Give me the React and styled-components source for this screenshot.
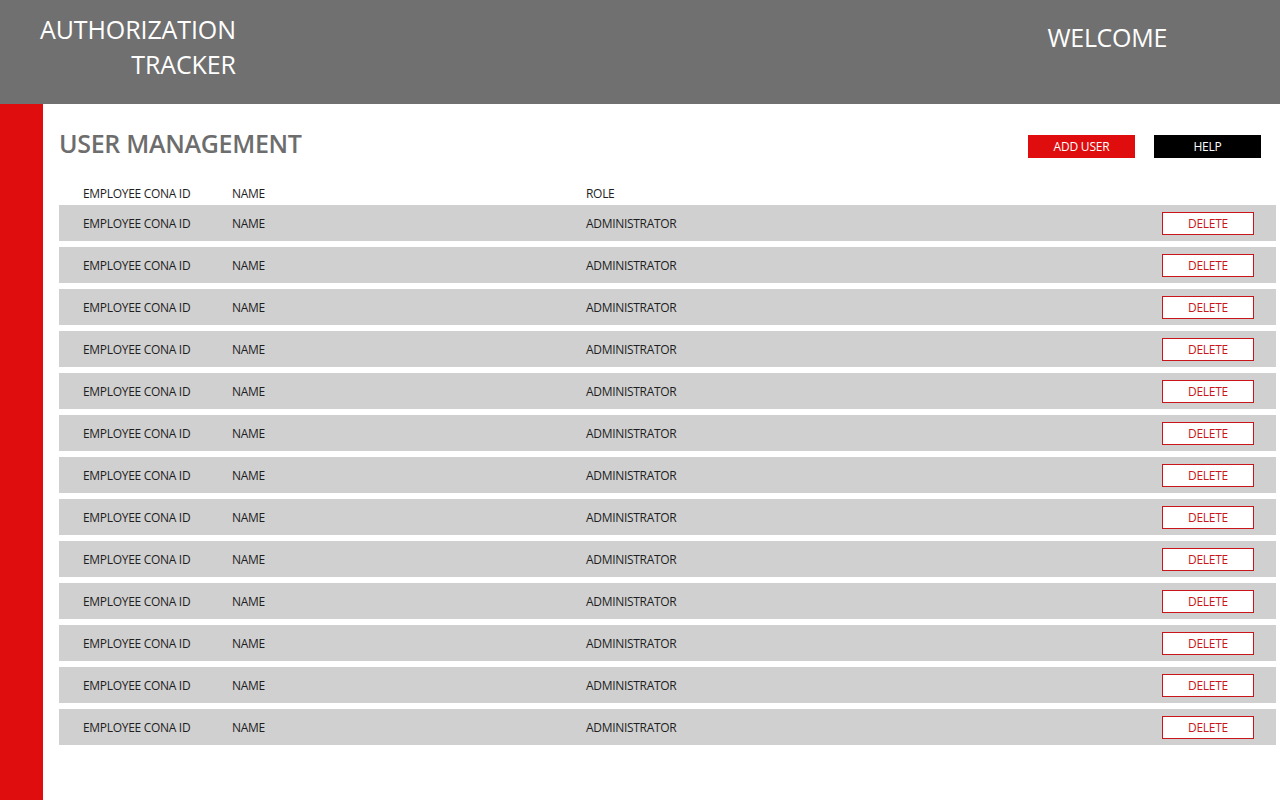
import React from 'react';
import styled, { createGlobalStyle } from 'styled-components';

const GlobalStyle = createGlobalStyle`
  html, body {
    margin: 0;
    padding: 0;
    background: #ffffff;
    font-family: "Open Sans", "Noto Sans", sans-serif;
  }
`;

const Page = styled.div`
  display: flex;
  flex-direction: column;
  width: 1280px;
  height: 800px;
  overflow: hidden;
`;

const Header = styled.header`
  height: 104px;
  background: #707070;
  display: flex;
  justify-content: space-between;
  color: #ffffff;
  flex-shrink: 0;
`;

const Brand = styled.div`
  display: flex;
  flex-direction: column;
  align-items: flex-end;
  padding: 12px 0 0 40px;
  font-size: 25px;
  line-height: 35px;
  letter-spacing: -0.1px;
`;

const Welcome = styled.div`
  padding: 20px 113px 0 0;
  font-size: 25px;
  line-height: 35px;
  letter-spacing: -0.3px;
`;

const Body = styled.div`
  flex: 1;
  display: flex;
`;

const Sidebar = styled.aside`
  width: 43px;
  background: #df0d0d;
  flex-shrink: 0;
`;

const Main = styled.main`
  flex: 1;
  padding: 20px 4px 0 16px;
`;

const TopBar = styled.div`
  display: flex;
  align-items: flex-start;
  justify-content: space-between;
  padding-right: 15px;
`;

const Title = styled.h1`
  margin: 0;
  font-size: 25px;
  line-height: 38px;
  font-weight: 600;
  color: #6d6d6d;
  letter-spacing: -0.3px;
`;

const Actions = styled.div`
  display: flex;
  gap: 19px;
  padding-top: 11px;
`;

const ActionButton = styled.button`
  width: 107px;
  height: 23px;
  border: none;
  padding: 0;
  font-family: inherit;
  font-size: 12px;
  letter-spacing: -0.2px;
  color: #ffffff;
  background: ${p => (p.$variant === 'dark' ? '#000000' : '#df0d0d')};
  cursor: pointer;
`;

const Table = styled.div`
  display: flex;
  flex-direction: column;
  gap: 6px;
  margin-top: 23px;
`;

const Row = styled.div`
  display: grid;
  grid-template-columns: 149px 354px 1fr 92px;
  align-items: center;
  height: ${p => (p.$head ? '14px' : '36px')};
  padding: 0 22px 0 24px;
  background: ${p => (p.$head ? 'transparent' : '#d0d0d0')};
  font-size: 12px;
  color: #1e1e1e;
  letter-spacing: -0.3px;
`;

const Cell = styled.span`
  white-space: nowrap;
`;

const DeleteButton = styled.button`
  width: 92px;
  height: 23px;
  padding: 0;
  background: #ffffff;
  border: 1.5px solid #c8161b;
  color: #c8161b;
  font-family: inherit;
  font-size: 12px;
  letter-spacing: -0.3px;
  cursor: pointer;
`;

const users = Array.from({ length: 13 }, (_, i) => ({
  id: i,
  employeeId: 'EMPLOYEE CONA ID',
  name: 'NAME',
  role: 'ADMINISTRATOR',
}));

export default function App() {
  return (
    <Page>
      <GlobalStyle />
      <Header>
        <Brand>
          <span>AUTHORIZATION</span>
          <span>TRACKER</span>
        </Brand>
        <Welcome>WELCOME</Welcome>
      </Header>
      <Body>
        <Sidebar />
        <Main>
          <TopBar>
            <Title>USER MANAGEMENT</Title>
            <Actions>
              <ActionButton>ADD USER</ActionButton>
              <ActionButton $variant="dark">HELP</ActionButton>
            </Actions>
          </TopBar>
          <Table>
            <Row $head>
              <Cell>EMPLOYEE CONA ID</Cell>
              <Cell>NAME</Cell>
              <Cell>ROLE</Cell>
            </Row>
            {users.map(u => (
              <Row key={u.id}>
                <Cell>{u.employeeId}</Cell>
                <Cell>{u.name}</Cell>
                <Cell>{u.role}</Cell>
                <DeleteButton>DELETE</DeleteButton>
              </Row>
            ))}
          </Table>
        </Main>
      </Body>
    </Page>
  );
}
